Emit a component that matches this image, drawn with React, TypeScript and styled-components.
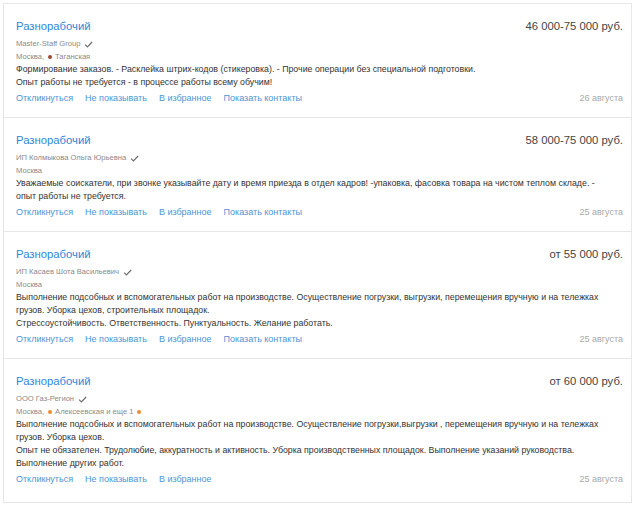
import styled, { createGlobalStyle } from "styled-components";

interface Vacancy {
  title: string;
  salary: string;
  company: string;
  city: string;
  metro?: { name: string; color: string; more?: string };
  text: string[];
  contacts: boolean;
  date: string;
}

const vacancies: Vacancy[] = [
  {
    title: "Разнорабочий",
    salary: "46 000-75 000 руб.",
    company: "Master-Staff Group",
    city: "Москва",
    metro: { name: "Таганская", color: "#9c4a32" },
    text: [
      "Формирование заказов. - Расклейка штрих-кодов (стикеровка). - Прочие операции без специальной подготовки.",
      "Опыт работы не требуется - в процессе работы всему обучим!",
    ],
    contacts: true,
    date: "26 августа",
  },
  {
    title: "Разнорабочий",
    salary: "58 000-75 000 руб.",
    company: "ИП Колмыкова Ольга Юрьевна",
    city: "Москва",
    text: [
      "Уважаемые соискатели, при звонке указывайте дату и время приезда в отдел кадров! -упаковка, фасовка товара на чистом теплом складе. - опыт работы не требуется.",
    ],
    contacts: true,
    date: "25 августа",
  },
  {
    title: "Разнорабочий",
    salary: "от 55 000 руб.",
    company: "ИП Касаев Шота Васильевич",
    city: "Москва",
    text: [
      "Выполнение подсобных и вспомогательных работ на производстве. Осуществление погрузки, выгрузки, перемещения вручную и на тележках грузов. Уборка цехов, строительных площадок.",
      "Стрессоустойчивость. Ответственность. Пунктуальность. Желание работать.",
    ],
    contacts: true,
    date: "25 августа",
  },
  {
    title: "Разнорабочий",
    salary: "от 60 000 руб.",
    company: "ООО Газ-Регион",
    city: "Москва",
    metro: { name: "Алексеевская", color: "#f08a2b", more: "и еще 1" },
    text: [
      "Выполнение подсобных и вспомогательных работ на производстве. Осуществление погрузки,выгрузки , перемещения вручную и на тележках грузов. Уборка цехов.",
      "Опыт не обязателен. Трудолюбие, аккуратность и активность. Уборка производственных площадок. Выполнение указаний руководства. Выполнение других работ.",
    ],
    contacts: false,
    date: "25 августа",
  },
];

const GlobalStyle = createGlobalStyle`
  body {
    margin: 0;
    background: #fff;
    font-family: "Liberation Sans", Arial, sans-serif;
  }
`;

const List = styled.div`
  width: 629px;
  padding: 3px 0 0 3px;
`;

const Card = styled.div`
  border: 1px solid #e6e6e6;
  border-top-width: 0;
  padding: 15px 8px 12px 12px;

  &:first-child {
    border-top-width: 1px;
  }

  &:last-child {
    padding-bottom: 16px;
  }
`;

const Head = styled.div`
  display: flex;
  justify-content: space-between;
  align-items: baseline;
  line-height: 14px;
`;

const Title = styled.a`
  font-size: 11.3px;
  color: #2f87d8;
  text-decoration: none;
`;

const Salary = styled.span`
  font-size: 11.3px;
  color: #444;
`;

const Meta = styled.div<{ top?: number }>`
  display: flex;
  align-items: center;
  gap: 3px;
  margin-top: ${(p) => p.top ?? 0}px;
  font-size: 7.6px;
  line-height: 12px;
  color: #8a8a8a;
`;

const Dot = styled.span<{ color: string }>`
  display: inline-block;
  width: 4px;
  height: 4px;
  border-radius: 50%;
  background: ${(p) => p.color};
  margin: 0 0 0 1px;
`;

const Check = styled.svg`
  width: 9px;
  height: 9px;
  margin-left: 1px;
`;

const Text = styled.p`
  margin: 0;
  padding-right: 12px;
  font-size: 8.8px;
  line-height: 13px;
  color: #333;
`;

const Actions = styled.div`
  display: flex;
  align-items: center;
  gap: 12px;
  margin-top: 3px;
  font-size: 9px;
  line-height: 13px;
`;

const Action = styled.a`
  color: #4d95d6;
  text-decoration: none;
`;

const Date = styled.span`
  margin-left: auto;
  color: #a8a8a8;
`;

function CheckIcon() {
  return (
    <Check viewBox="0 0 10 10">
      <path d="M1.2 5.2 L3.8 7.8 L9 2.2" fill="none" stroke="#6d6d6d" strokeWidth="1.3" />
    </Check>
  );
}

function App() {
  return (
    <>
      <GlobalStyle />
      <List>
        {vacancies.map((v, i) => (
          <Card key={i}>
            <Head>
              <Title href="#">{v.title}</Title>
              <Salary>{v.salary}</Salary>
            </Head>
            <Meta top={5}>
              {v.company}
              <CheckIcon />
            </Meta>
            <Meta top={1}>
              {v.city}
              {v.metro && ","}
              {v.metro && (
                <>
                  <Dot color={v.metro.color} />
                  {v.metro.name}
                  {v.metro.more && <> {v.metro.more}</>}
                  {v.metro.more && <Dot color={v.metro.color} />}
                </>
              )}
            </Meta>
            {v.text.map((t, j) => (
              <Text key={j}>{t}</Text>
            ))}
            <Actions>
              <Action href="#">Откликнуться</Action>
              <Action href="#">Не показывать</Action>
              <Action href="#">В избранное</Action>
              {v.contacts && <Action href="#">Показать контакты</Action>}
              <Date>{v.date}</Date>
            </Actions>
          </Card>
        ))}
      </List>
    </>
  );
}

export default App;
